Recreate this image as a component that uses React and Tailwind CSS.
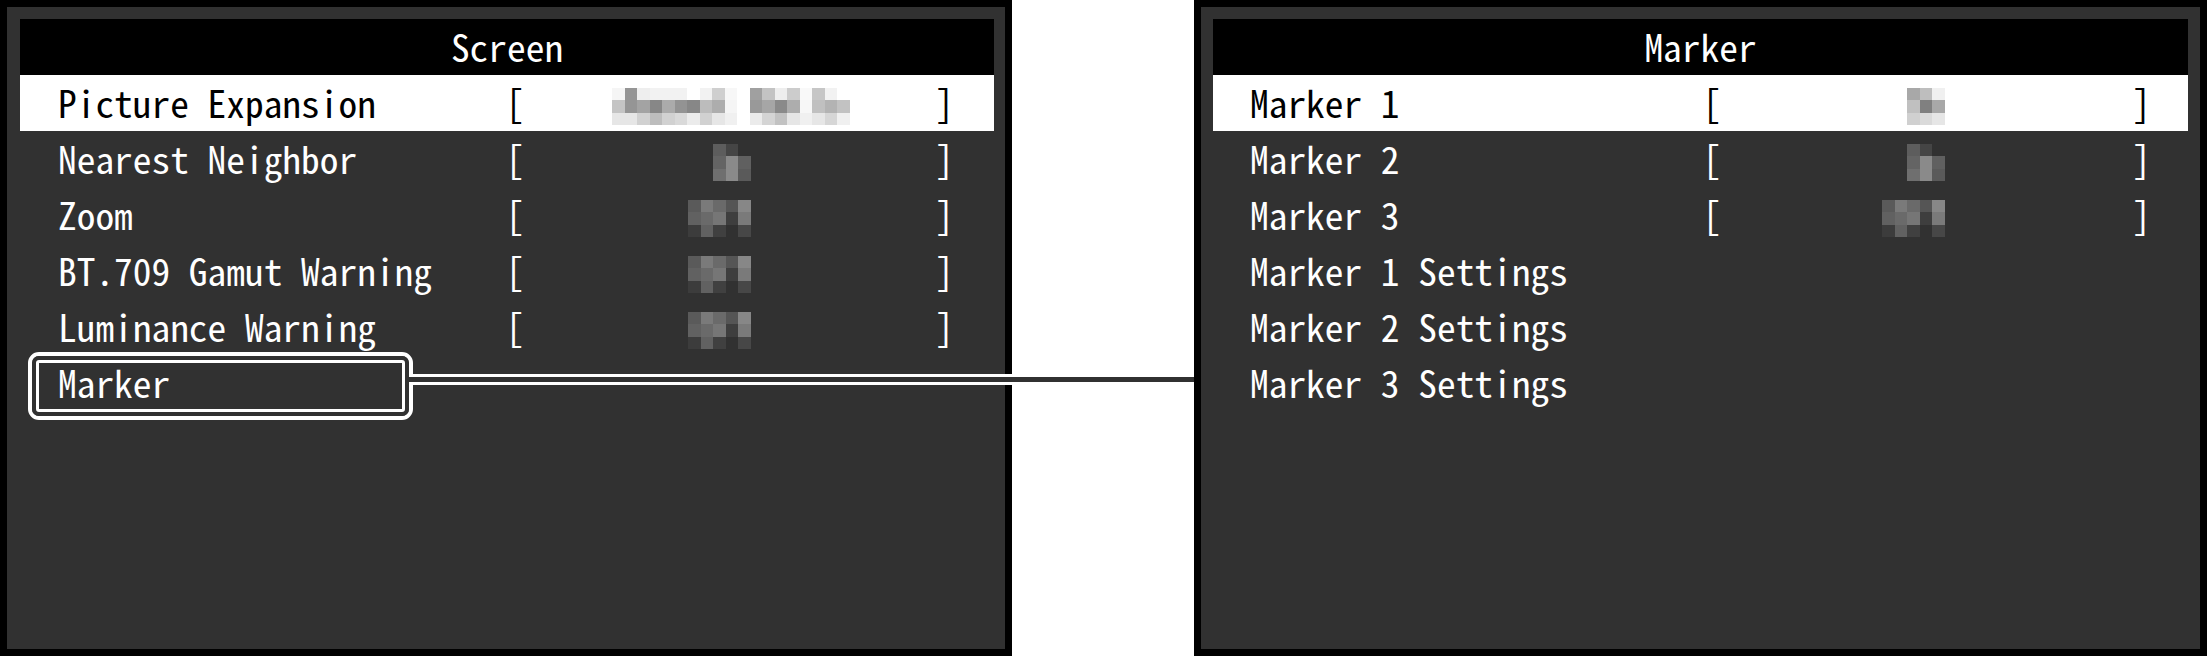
const OFF = [
  ["#5a5a5a", "#7a7a7a", "#6a6a6a", "#555555", "#878787"],
  ["#616161", "#6a6a6a", "#767676", "#3e3e3e", "#7a7a7a"],
  ["#3c3c3c", "#616161", "#404040", null, "#474747"],
];

const ON_DARK = [
  ["#5d5d5d", "#454545", null],
  ["#646464", "#8a8a8a", "#606060"],
  ["#6f6f6f", "#8a8a8a", "#5a5a5a"],
];

const ON_LIGHT = [
  ["#a8a8a8", "#bebebe", "#f0f0f0"],
  ["#c0c0c0", "#808080", "#a8a8a8"],
  ["#d0d0d0", "#dadada", "#e6e6e6"],
];

// blurred value of "Picture Expansion" on the highlighted row
const EXPANSION = [
  ["#f5f5f5", "#959595", "#eeeeee", "#f2f2f2", "#f2f2f2", "#f2f2f2", null, "#f2f2f2", "#cfcfcf", "#f7f7f7", null, "#a0a0a0", "#c3c3c3", "#eeeeee", "#cccccc", "#f9f9f9", "#c6c6c6", "#f2f2f2", null],
  ["#c4c4c4", "#959595", "#a3a3a3", "#878787", "#ababab", "#939393", "#878787", "#bcbcbc", "#adadad", "#f5f5f5", null, "#999999", "#a6a6a6", "#8a8a8a", "#adadad", "#f7f7f7", "#c0c0c0", "#b3b3b3", "#c2c2c2"],
  ["#e6e6e6", "#e6e6e6", "#d1d1d1", "#bdbdbd", "#d1d1d1", "#d9d9d9", "#ebebeb", "#d1d1d1", "#e6e6e6", "#f0f0f0", null, "#ebebeb", "#d4d4d4", "#c2c2c2", "#e6e6e6", "#f0f0f0", "#e6e6e6", "#d6d6d6", "#f0f0f0"],
];

const screenRows = [
  { label: "Picture Expansion", selected: true, value: EXPANSION, offset: "ml-[88px]" },
  { label: "Nearest Neighbor", value: ON_DARK, offset: "ml-[189px]" },
  { label: "Zoom", value: OFF, offset: "ml-[164px]" },
  { label: "BT.709 Gamut Warning", value: OFF, offset: "ml-[164px]" },
  { label: "Luminance Warning", value: OFF, offset: "ml-[164px]" },
  { label: "Marker" },
];

const markerRows = [
  { label: "Marker 1", selected: true, value: ON_LIGHT, offset: "ml-[186px]" },
  { label: "Marker 2", value: ON_DARK, offset: "ml-[186px]" },
  { label: "Marker 3", value: OFF, offset: "ml-[161px]" },
  { label: "Marker 1 Settings" },
  { label: "Marker 2 Settings" },
  { label: "Marker 3 Settings" },
];

function Pixels({ cells, className }) {
  return (
    <div className={`flex flex-col mt-[7px] ${className}`}>
      {cells.map((row, i) => (
        <div key={i} className="flex">
          {row.map((c, j) => (
            <div key={j} className="w-[12.5px] h-[12.5px]" style={{ backgroundColor: c || "transparent" }} />
          ))}
        </div>
      ))}
    </div>
  );
}

function MenuRow({ row, indent, labelWidth, middleWidth }) {
  return (
    <div className={`h-[56px] flex items-center ${indent} ${row.selected ? "bg-white text-black" : "text-white"}`}>
      <span className={`${labelWidth} shrink-0 whitespace-pre`}>{row.label}</span>
      {row.value && (
        <>
          <span className="w-[18.7px] shrink-0">[</span>
          <div className={`${middleWidth} shrink-0 h-full flex items-center`}>
            <Pixels cells={row.value} className={row.offset} />
          </div>
          <span className="w-[18.7px] shrink-0">]</span>
        </>
      )}
    </div>
  );
}

function Panel({ title, rows, className, ...rowProps }) {
  return (
    <div className={`h-[656px] shrink-0 border-[7px] border-black bg-[#313131] pt-[12px] ${className}`}>
      <div className="h-[56px] bg-black text-white flex items-center justify-center">{title}</div>
      {rows.map((row) => (
        <MenuRow key={row.label} row={row} {...rowProps} />
      ))}
    </div>
  );
}

export default function App() {
  return (
    <div className="relative w-[2207px] h-[656px] bg-white flex justify-between overflow-hidden font-['Noto_Sans_Mono_CJK_JP','DejaVu_Sans_Mono',monospace] text-[37.4px] leading-none">
      <Panel
        title="Screen"
        rows={screenRows}
        className="w-[1012px] pl-[13px] pr-[11px]"
        indent="pl-[38px]"
        labelWidth="w-[447.5px]"
        middleWidth="w-[411px]"
      />
      <Panel
        title="Marker"
        rows={markerRows}
        className="w-[1013px] px-[12px]"
        indent="pl-[37px]"
        labelWidth="w-[452.5px]"
        middleWidth="w-[411px]"
      />

      {/* callout frame around "Marker" */}
      <div className="absolute left-[28px] top-[352px] w-[385px] h-[68px] rounded-[11px] border-[4px] border-white">
        <div className="h-full rounded-[7px] border-[4px] border-[#313131]">
          <div className="h-full rounded-[3px] border-[3px] border-white" />
        </div>
      </div>
      <div className="absolute left-[405px] top-[377px] w-[8px] h-[5px] bg-[#313131]" />
      <div className="absolute left-[409px] top-[374px] w-[785px] flex flex-col">
        <div className="h-[3px] bg-white" />
        <div className="h-[5px] bg-[#313131]" />
        <div className="h-[3px] bg-white" />
      </div>
    </div>
  );
}
